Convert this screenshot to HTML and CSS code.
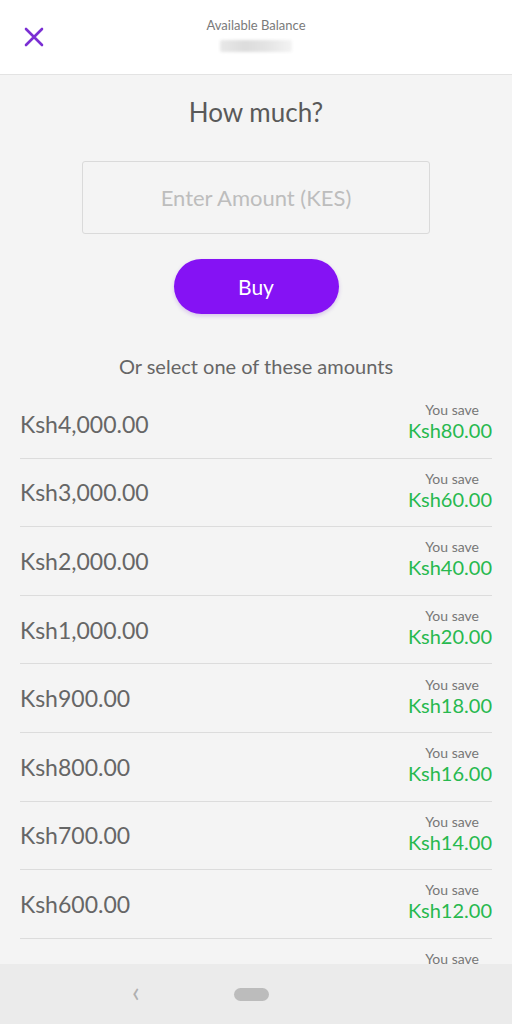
FILE: index.html
```html
<!DOCTYPE html>
<html lang="en">
<head>
    <meta charset="UTF-8">
    <meta name="viewport" content="width=device-width, initial-scale=1.0">
    <title>Buy Airtime</title>
    <link rel="stylesheet" href="styles.css">
</head>
<body>
    <div class="screen">
        <header class="topbar">
            <button class="close" aria-label="Close">
                <svg width="20" height="20" viewBox="0 0 20 20"><path d="M2 2 L18 18 M18 2 L2 18" stroke="#7a2fd3" stroke-width="2.6" stroke-linecap="round"/></svg>
            </button>
            <div class="balance">
                <div class="balance-label">Available Balance</div>
                <div class="balance-value"></div>
            </div>
        </header>

        <main class="content">
            <h1 class="title">How much?</h1>
            <div class="amount-box">
                <input type="text" placeholder="Enter Amount (KES)">
            </div>
            <button class="buy">Buy</button>
            <p class="hint">Or select one of these amounts</p>

            <ul class="options">
                <li class="option"><span class="amount">Ksh4,000.00</span><span class="save"><small>You save</small><b>Ksh80.00</b></span></li>
                <li class="option"><span class="amount">Ksh3,000.00</span><span class="save"><small>You save</small><b>Ksh60.00</b></span></li>
                <li class="option"><span class="amount">Ksh2,000.00</span><span class="save"><small>You save</small><b>Ksh40.00</b></span></li>
                <li class="option"><span class="amount">Ksh1,000.00</span><span class="save"><small>You save</small><b>Ksh20.00</b></span></li>
                <li class="option"><span class="amount">Ksh900.00</span><span class="save"><small>You save</small><b>Ksh18.00</b></span></li>
                <li class="option"><span class="amount">Ksh800.00</span><span class="save"><small>You save</small><b>Ksh16.00</b></span></li>
                <li class="option"><span class="amount">Ksh700.00</span><span class="save"><small>You save</small><b>Ksh14.00</b></span></li>
                <li class="option"><span class="amount">Ksh600.00</span><span class="save"><small>You save</small><b>Ksh12.00</b></span></li>
                <li class="option"><span class="amount">Ksh500.00</span><span class="save"><small>You save</small><b>Ksh10.00</b></span></li>
            </ul>
        </main>

        <nav class="navbar">
            <span class="nav-back">&lsaquo;</span>
            <span class="nav-home"></span>
        </nav>
    </div>
</body>
</html>
```

FILE: styles.css
```css
* {
    box-sizing: border-box;
}
body {
    margin: 0;
    background: #f4f4f4;
    font-family: Lato, "Open Sans", sans-serif;
}
.screen {
    width: 512px;
    height: 1024px;
    display: flex;
    flex-direction: column;
    overflow: hidden;
}
.topbar {
    height: 75px;
    background: white;
    border-bottom: 1px solid #e3e3e3;
    display: flex;
    align-items: center;
    position: relative;
    flex-shrink: 0;
}
.close {
    border: none;
    background: none;
    padding: 0;
    margin-left: 24px;
    width: 20px;
    height: 20px;
    cursor: pointer;
    position: relative;
    z-index: 1;
}
.balance {
    position: absolute;
    left: 0;
    right: 0;
    top: 17px;
    display: flex;
    flex-direction: column;
    align-items: center;
}
.balance-label {
    font-size: 13px;
    color: #7a7a7a;
}
.balance-value {
    margin-top: 7px;
    width: 72px;
    height: 12px;
    border-radius: 2px;
    background: linear-gradient(90deg, #e8e8e8 0%, #dcdcdc 35%, #e4e4e4 65%, #f3f3f3 100%);
    filter: blur(1.5px);
}
.content {
    flex: 1;
    overflow: hidden;
    display: flex;
    flex-direction: column;
    align-items: center;
}
.content > * {
    flex-shrink: 0;
}
.title {
    margin: 19px 0 0;
    font-size: 26px;
    font-weight: normal;
    color: #595959;
    line-height: 36px;
}
.amount-box {
    margin-top: 31px;
    width: 348px;
    height: 73px;
    border: 1px solid #dadada;
    border-radius: 3px;
    display: flex;
}
.amount-box input {
    flex: 1;
    min-width: 0;
    border: none;
    background: transparent;
    text-align: center;
    font-family: inherit;
    font-size: 22px;
    color: #555;
    outline: none;
}
.amount-box input::placeholder {
    color: #bdbdbd;
}
.buy {
    margin-top: 25px;
    width: 165px;
    height: 55px;
    border: none;
    border-radius: 28px;
    background: #8512f4;
    color: white;
    font-family: inherit;
    font-size: 21px;
    box-shadow: 0 2px 4px rgba(100, 0, 200, 0.2);
    cursor: pointer;
}
.hint {
    margin: 39px 0 0;
    font-size: 20px;
    color: #666;
    line-height: 26px;
}
.options {
    list-style: none;
    margin: 11px 0 0;
    padding: 0 20px;
    width: 100%;
}
.option {
    height: 68.6px;
    border-bottom: 1px solid #dcdcdc;
    display: flex;
    align-items: center;
    justify-content: space-between;
    cursor: pointer;
}
.amount {
    font-size: 23px;
    color: #666;
}
.save {
    display: flex;
    flex-direction: column;
    align-items: flex-end;
    margin-top: -4px;
}
.save small {
    font-size: 14px;
    color: #777;
    margin-right: 13px;
}
.save b {
    font-weight: normal;
    font-size: 20px;
    color: #27b94f;
    line-height: 24px;
}
.navbar {
    height: 60px;
    flex-shrink: 0;
    background: #ebebeb;
    display: flex;
    align-items: center;
    gap: 94px;
    padding-left: 132px;
}
.nav-back {
    font-size: 28px;
    color: #b0b0b0;
    line-height: 1;
    margin-top: -6px;
}
.nav-home {
    width: 35px;
    height: 13px;
    border-radius: 7px;
    background: #bcbcbc;
}
```
